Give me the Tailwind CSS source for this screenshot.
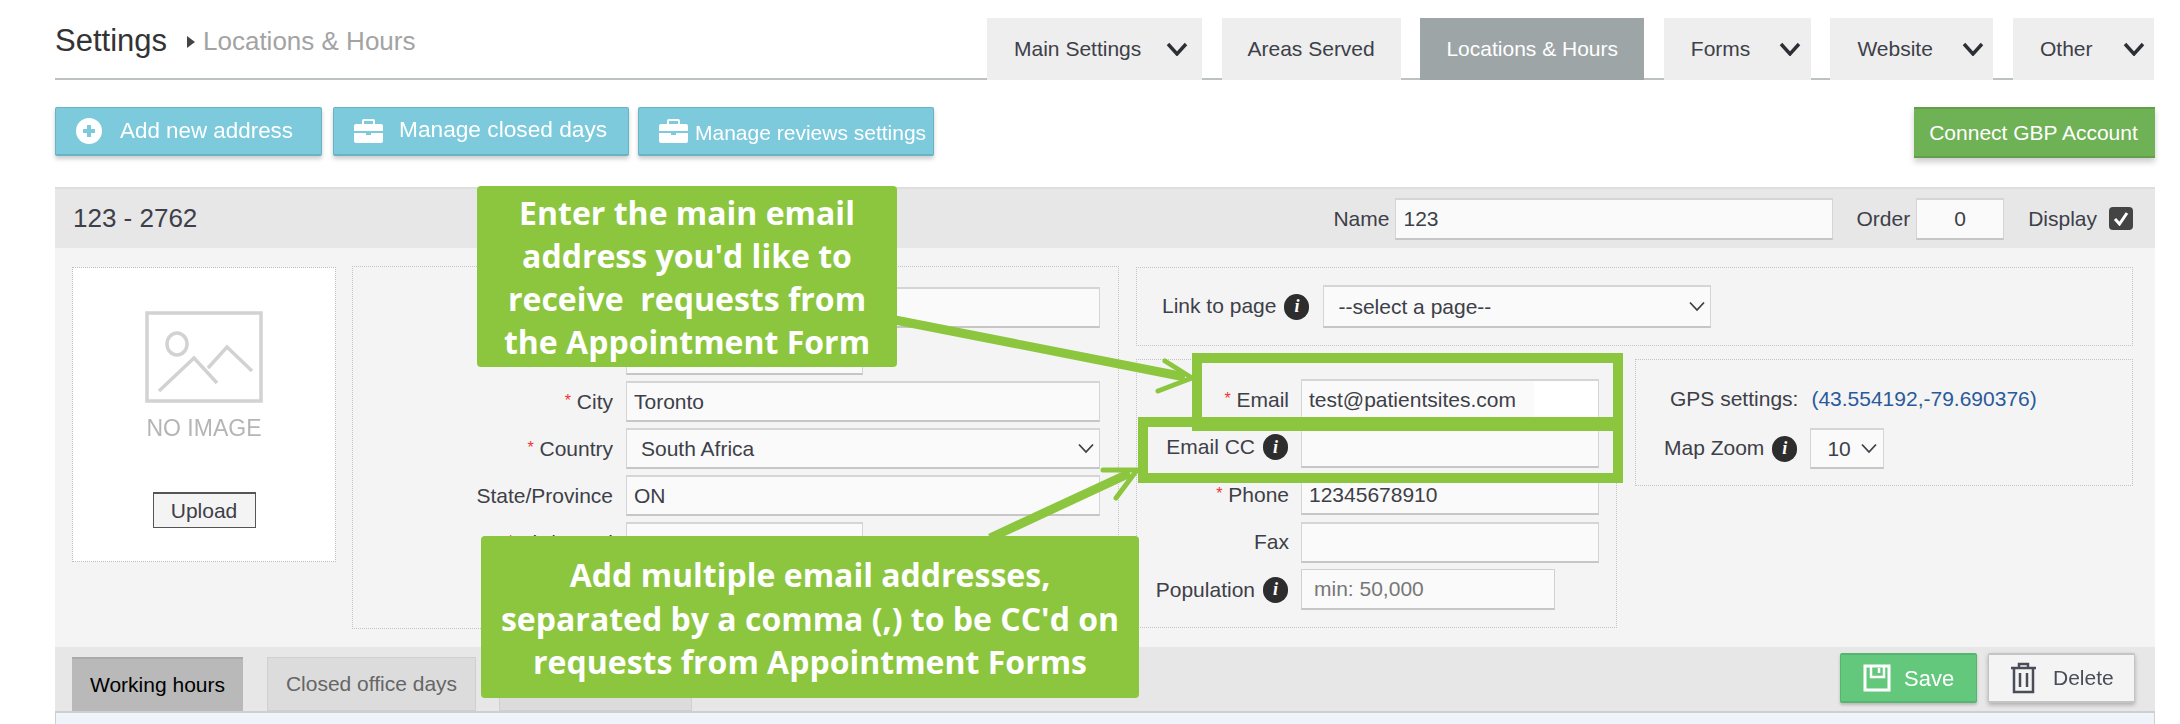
<!DOCTYPE html>
<html>
<head>
<meta charset="utf-8">
<script src="https://cdn.jsdelivr.net/npm/@tailwindcss/browser@4"></script>
</head>
<body class="bg-white">
<div class="relative w-[2180px] h-[724px] overflow-hidden bg-white text-[21px] text-[#3d4048] font-['Liberation_Sans',Arial,sans-serif]">

  <!-- Page header -->
  <header class="ml-[55px] w-[2099px] h-[80px] flex border-b-2 border-[#bcc1c1]">
    <div class="flex items-center h-[78px] pt-[4px]">
      <span class="text-[31px] text-[#333]">Settings</span>
      <svg class="ml-[20px] mt-[2px]" width="8" height="12" viewBox="0 0 8 12"><path d="M0 0 L8 6 L0 12 Z" fill="#444"/></svg>
      <span class="ml-[8px] text-[26px] text-[#a3a3a3]">Locations &amp; Hours</span>
    </div>
    <nav class="ml-auto flex gap-[19.6px] pt-[18px] h-[80px]">
      <div class="w-[215px] bg-[#eeeeee] flex items-center pl-[27px]">
        <span>Main Settings</span>
        <svg class="ml-[25px]" width="22" height="14" viewBox="0 0 22 14"><path d="M2 2 L11 12 L20 2" fill="none" stroke="#2c2f36" stroke-width="3.4"/></svg>
      </div>
      <div class="w-[179px] bg-[#eeeeee] flex items-center justify-center">Areas Served</div>
      <div class="w-[224px] bg-[#9ea5a7] text-white flex items-center justify-center">Locations &amp; Hours</div>
      <div class="w-[147px] bg-[#eeeeee] flex items-center pl-[27px]">
        <span>Forms</span>
        <svg class="ml-[29px]" width="22" height="14" viewBox="0 0 22 14"><path d="M2 2 L11 12 L20 2" fill="none" stroke="#2c2f36" stroke-width="3.4"/></svg>
      </div>
      <div class="w-[163px] bg-[#eeeeee] flex items-center pl-[27px]">
        <span>Website</span>
        <svg class="ml-[29px]" width="22" height="14" viewBox="0 0 22 14"><path d="M2 2 L11 12 L20 2" fill="none" stroke="#2c2f36" stroke-width="3.4"/></svg>
      </div>
      <div class="w-[141px] bg-[#eeeeee] flex items-center pl-[27px]">
        <span>Other</span>
        <svg class="ml-[30px]" width="22" height="14" viewBox="0 0 22 14"><path d="M2 2 L11 12 L20 2" fill="none" stroke="#2c2f36" stroke-width="3.4"/></svg>
      </div>
    </nav>
  </header>

  <!-- Action buttons -->
  <div class="ml-[55px] mt-[27px] w-[2100px] h-[51px] flex text-white">
    <button class="w-[267px] h-[49px] flex items-center pl-[20px] bg-[#7ccadc] border border-[#68b4c6] border-b-2 rounded-[2px] shadow-[0_3px_4px_rgba(0,0,0,0.2)]">
      <span class="flex items-center blur-[0.5px]">
        <svg width="26" height="26" viewBox="0 0 26 26"><circle cx="13" cy="13" r="13" fill="#fff"/><path d="M13 7 V19 M7 13 H19" stroke="#7ccadc" stroke-width="4"/></svg>
        <span class="ml-[18px] text-[22.4px]">Add new address</span>
      </span>
    </button>
    <button class="ml-[11px] w-[296px] h-[49px] flex items-center pl-[20px] bg-[#7ccadc] border border-[#68b4c6] border-b-2 rounded-[2px] shadow-[0_3px_4px_rgba(0,0,0,0.2)]">
      <span class="flex items-center blur-[0.5px]">
        <svg width="29" height="24" viewBox="0 0 29 24"><path d="M9 5 V2 Q9 1 10 1 H19 Q20 1 20 2 V5" fill="none" stroke="#fff" stroke-width="2"/><path d="M2 5 H27 Q29 5 29 7 V12 H0 V7 Q0 5 2 5 Z" fill="#fff"/><path d="M0 14 H12 V16 H17 V14 H29 V22 Q29 24 27 24 H2 Q0 24 0 22 Z" fill="#fff"/></svg>
        <span class="ml-[16px] mb-[3px] text-[22.7px]">Manage closed days</span>
      </span>
    </button>
    <button class="ml-[9px] w-[296px] h-[49px] flex items-center pl-[20px] bg-[#7ccadc] border border-[#68b4c6] border-b-2 rounded-[2px] shadow-[0_3px_4px_rgba(0,0,0,0.2)]">
      <span class="flex items-center blur-[0.5px]">
        <svg width="29" height="24" viewBox="0 0 29 24"><path d="M9 5 V2 Q9 1 10 1 H19 Q20 1 20 2 V5" fill="none" stroke="#fff" stroke-width="2"/><path d="M2 5 H27 Q29 5 29 7 V12 H0 V7 Q0 5 2 5 Z" fill="#fff"/><path d="M0 14 H12 V16 H17 V14 H29 V22 Q29 24 27 24 H2 Q0 24 0 22 Z" fill="#fff"/></svg>
        <span class="ml-[7px] mt-[3px] text-[21px] whitespace-nowrap">Manage reviews settings</span>
      </span>
    </button>
    <button class="ml-auto w-[241px] h-[51px] bg-[#6fb155] border-t-2 border-b-2 border-[#639f4b] shadow-[0_4px_6px_rgba(0,0,0,0.2)] text-[21px] whitespace-nowrap pr-[2px]">Connect GBP Account</button>
  </div>

  <!-- Location panel -->
  <section class="ml-[55px] mt-[29px] w-[2100px]">
    <div class="h-[61px] bg-[#e7e7e7] border-t-2 border-[#dedede] flex items-center pl-[18px] pr-[22px]">
      <span class="text-[26px]">123 - 2762</span>
      <div class="ml-auto flex items-center">
        <span>Name</span>
        <input value="123" class="ml-[6px] w-[438px] h-[42px] pl-[7px] bg-[#fafafa] border border-[#d5d5d5] border-t-2 border-b-2 border-b-[#c6c6c6]">
        <span class="ml-[23px]">Order</span>
        <input value="0" class="ml-[6px] w-[88px] h-[42px] text-center bg-[#fafafa] border border-[#d5d5d5] border-t-2 border-b-2 border-b-[#c6c6c6]">
        <span class="ml-[24px]">Display</span>
        <span class="ml-[12px] w-[24px] h-[23px] rounded-[4px] bg-[#444] flex items-center justify-center">
          <svg width="16" height="15" viewBox="0 0 16 15"><path d="M2 8 L6.5 13 L14 2" fill="none" stroke="#fff" stroke-width="3"/></svg>
        </span>
      </div>
    </div>

    <div class="h-[399px] bg-[#f4f4f4] flex items-start pl-[17px] pt-[19px]">
      <!-- Image -->
      <div class="w-[264px] h-[295px] bg-white border border-dotted border-[#bbb] flex flex-col items-center">
        <svg class="mt-[43px] blur-[0.5px]" width="118" height="92" viewBox="0 0 118 92" fill="none" stroke="#d2d2d2" stroke-width="3.5">
          <rect x="2" y="2" width="114" height="88"/>
          <ellipse cx="32" cy="33" rx="10" ry="11"/>
          <path d="M14 80 L49 47 L72 72 M63 57 L82 36 L107 60"/>
        </svg>
        <span class="mt-[12px] text-[23px] leading-[26px] text-[#b5b5b5] blur-[0.4px]">NO IMAGE</span>
        <button class="mt-[51px] w-[103px] h-[36px] border border-[#555] border-t-2 bg-[#f4f4f4] text-[21px]">Upload</button>
      </div>

      <!-- Address -->
      <div class="ml-[16px] -mt-[1px] w-[767px] h-[363px] border border-dotted border-[#c4c4c4] pt-[20px] flex flex-col gap-[6px]">
        <div class="flex items-center h-[41px] pl-[273px]"><input class="w-[474px] h-[41px] pl-[7px] bg-[#fafafa] border border-[#d5d5d5] border-t-2 border-b-2 border-b-[#c6c6c6]"></div>
        <div class="flex items-center h-[41px] pl-[273px]"><input class="w-[237px] h-[41px] pl-[7px] bg-[#fafafa] border border-[#d5d5d5] border-t-2 border-b-2 border-b-[#c6c6c6]"></div>
        <div class="flex items-center h-[41px]"><label class="w-[260px] text-right"><span class="text-[#e33] text-[16px] align-[3px]">*</span> City</label><input value="Toronto" class="ml-[13px] w-[474px] h-[41px] pl-[7px] bg-[#fafafa] border border-[#d5d5d5] border-t-2 border-b-2 border-b-[#c6c6c6]"></div>
        <div class="flex items-center h-[41px]"><label class="w-[260px] text-right"><span class="text-[#e33] text-[16px] align-[3px]">*</span> Country</label>
          <div class="relative ml-[13px] w-[474px] h-[41px]">
            <select class="appearance-none w-full h-full pl-[14px] bg-[#fafafa] border border-[#d5d5d5] border-t-2 border-b-2 border-b-[#c6c6c6]"><option>South Africa</option></select>
            <svg class="absolute right-[6px] top-[15px]" width="16" height="11" viewBox="0 0 16 11"><path d="M1 1.5 L8 9 L15 1.5" fill="none" stroke="#3d4048" stroke-width="1.8"/></svg>
          </div>
        </div>
        <div class="flex items-center h-[41px]"><label class="w-[260px] text-right">State/Province</label><input value="ON" class="ml-[13px] w-[474px] h-[41px] pl-[7px] bg-[#fafafa] border border-[#d5d5d5] border-t-2 border-b-2 border-b-[#c6c6c6]"></div>
        <div class="flex items-center h-[41px]"><label class="w-[260px] text-right"><span class="text-[#e33] text-[16px] align-[3px]">*</span> Zip/Postal</label><input value="L5M 2B3" class="ml-[13px] w-[237px] h-[41px] pl-[7px] text-[#ccc] bg-[#fafafa] border border-[#d5d5d5] border-t-2 border-b-2 border-b-[#c6c6c6]"></div>
      </div>

      <!-- Right column -->
      <div class="ml-[17px] w-[997px]">
        <div class="h-[79px] border border-dotted border-[#c4c4c4] flex items-center pl-[25px]">
          <span class="mb-[2px]">Link to page</span>
          <span class="ml-[8px] w-[25px] h-[26px] rounded-full bg-[#2d2d2d] flex items-center justify-center text-white text-[18px] font-bold italic font-['Liberation_Serif',serif]">i</span>
          <div class="relative ml-[14px] w-[388px] h-[43px]">
            <select class="appearance-none w-full h-full pl-[14px] bg-[#fafafa] border border-[#d5d5d5] border-t-2 border-b-2 border-b-[#c6c6c6]"><option>--select a page--</option></select>
            <svg class="absolute right-[6px] top-[16px]" width="16" height="11" viewBox="0 0 16 11"><path d="M1 1.5 L8 9 L15 1.5" fill="none" stroke="#3d4048" stroke-width="1.8"/></svg>
          </div>
        </div>
        <div class="mt-[13px] flex items-start">
          <div class="w-[481px] h-[269px] border border-dotted border-[#c4c4c4] pt-[19px] flex flex-col gap-[6.5px]">
            <div class="flex items-center h-[41px]"><label class="w-[152px] text-right"><span class="text-[#e33] text-[16px] align-[3px]">*</span> Email</label><input value="test@patientsites.com" class="ml-[12px] w-[298px] h-[41px] pl-[7px] bg-[linear-gradient(to_right,#fafafa_232px,#ffffff_232px)] border border-[#d5d5d5] border-t-2 border-b-2 border-b-[#c6c6c6]"></div>
            <div class="flex items-center h-[41px]"><label class="w-[152px] flex items-center justify-end pr-[1px]">Email CC<span class="ml-[8px] w-[25px] h-[26px] rounded-full bg-[#2d2d2d] flex items-center justify-center text-white text-[18px] font-bold italic font-['Liberation_Serif',serif]">i</span></label><input class="ml-[12px] w-[298px] h-[41px] pl-[7px] bg-[#fafafa] border border-[#d5d5d5] border-t-2 border-b-2 border-b-[#c6c6c6]"></div>
            <div class="flex items-center h-[41px]"><label class="w-[152px] text-right"><span class="text-[#e33] text-[16px] align-[3px]">*</span> Phone</label><input value="12345678910" class="ml-[12px] w-[298px] h-[41px] pl-[7px] bg-[#fafafa] border border-[#d5d5d5] border-t-2 border-b-2 border-b-[#c6c6c6]"></div>
            <div class="flex items-center h-[41px]"><label class="w-[152px] text-right">Fax</label><input class="ml-[12px] w-[298px] h-[41px] pl-[7px] bg-[#fafafa] border border-[#d5d5d5] border-t-2 border-b-2 border-b-[#c6c6c6]"></div>
            <div class="flex items-center h-[41px]"><label class="w-[152px] flex items-center justify-end pr-[1px]">Population<span class="ml-[8px] w-[25px] h-[26px] rounded-full bg-[#2d2d2d] flex items-center justify-center text-white text-[18px] font-bold italic font-['Liberation_Serif',serif]">i</span></label><input placeholder="min: 50,000" class="ml-[12px] w-[254px] h-[41px] pl-[12px] placeholder:text-[#777] bg-[#fafafa] border border-[#cfcfcf] border-b-2 border-b-[#c6c6c6]"></div>
          </div>
          <div class="ml-[18px] w-[498px] h-[127px] border border-dotted border-[#c4c4c4] pt-[24px] pl-[29px]">
            <div class="flex items-center h-[30px]">
              <span class="ml-[5px]">GPS settings:</span>
              <span class="ml-[13px] text-[#2a5a9a]">(43.554192,-79.690376)</span>
            </div>
            <div class="flex items-center mt-[14px] h-[41px]">
              <span class="-ml-[1px] mb-[2px]">Map Zoom</span>
              <span class="ml-[8px] w-[25px] h-[26px] rounded-full bg-[#2d2d2d] flex items-center justify-center text-white text-[18px] font-bold italic font-['Liberation_Serif',serif]">i</span>
              <div class="relative ml-[13px] w-[74px] h-[41px]">
                <select class="appearance-none w-full h-full pl-[16px] bg-[#fafafa] border border-[#d5d5d5] border-t-2 border-b-2 border-b-[#c6c6c6]"><option>10</option></select>
                <svg class="absolute right-[7px] top-[15px]" width="16" height="11" viewBox="0 0 16 11"><path d="M1 1.5 L8 9 L15 1.5" fill="none" stroke="#3d4048" stroke-width="1.8"/></svg>
              </div>
            </div>
          </div>
        </div>
      </div>
    </div>

    <!-- Footer tabs & actions -->
    <div class="h-[66px] bg-[#e7e7e7] border-b-2 border-[#cfcfcf] flex items-end pl-[17px] pr-[20px]">
      <div class="w-[171px] h-[54px] bg-[#b9b9b9] border-t-2 border-[#aaa] flex items-center justify-center text-black">Working hours</div>
      <div class="ml-[24px] w-[209px] h-[54px] bg-[#dcdcdc] border border-[#cfcfcf] flex items-center justify-center text-[#666]">Closed office days</div>
      <div class="ml-[23px] w-[193px] h-[54px] bg-[#dcdcdc] border border-[#cfcfcf]"></div>
      <div class="ml-auto self-start mt-[6px] flex">
        <button class="w-[137px] h-[50px] bg-[#64c87c] border border-[#56b56e] border-t-2 border-b-2 rounded-[2px] shadow-[0_2px_3px_rgba(0,0,0,0.2)] text-white flex items-center pl-[22px]">
          <span class="flex items-center blur-[0.5px]">
            <svg width="28" height="28" viewBox="0 0 28 28"><path d="M2 2 H26 V26 H2 Z" fill="none" stroke="#fff" stroke-width="3"/><path d="M8 2 V13 H21 V2 M16 4 V9" fill="none" stroke="#fff" stroke-width="2.5"/></svg>
            <span class="ml-[13px] text-[22px]">Save</span>
          </span>
        </button>
        <button class="ml-[11px] w-[147px] h-[50px] bg-[#f4f4f4] border border-[#c4c4c4] border-t-2 border-b-2 rounded-[2px] shadow-[0_2px_4px_rgba(0,0,0,0.25)] text-[#4a4d57] flex items-center pl-[21px]">
          <span class="flex items-center blur-[0.4px]">
            <svg width="27" height="32" viewBox="0 0 27 32" fill="none" stroke="#4a4d57" stroke-width="2.5"><path d="M1 6 H26 M9 5 V2 H18 V5"/><path d="M4 6 V30 H23 V6"/><path d="M10 11 V25 M17 11 V25"/></svg>
            <span class="ml-[16px]">Delete</span>
          </span>
        </button>
      </div>
    </div>
    <div class="h-[11px] bg-[#eff3fa] border-x border-[#cfcfcf]"></div>
  </section>

  <!-- Annotation overlay -->
  <svg class="absolute left-0 top-0 pointer-events-none" width="2180" height="724" viewBox="0 0 2180 724" fill="none" stroke="#8cc63e">
    <path d="M895 320 L1185 377" stroke-width="9"/>
    <path d="M1165 361 L1192 378 L1158 391" stroke-width="5" stroke-linecap="round" stroke-linejoin="round"/>
    <path d="M990 538 L1130 473" stroke-width="9"/>
    <path d="M1103 470 L1137 470 L1116 498" stroke-width="5" stroke-linecap="round" stroke-linejoin="round"/>
    <rect x="1197" y="358" width="421" height="68" stroke-width="10"/>
    <rect x="1143" y="422" width="475" height="56" stroke-width="10"/>
  </svg>

  <div class="absolute left-[477px] top-[186px] w-[420px] h-[181px] rounded-[4px] bg-[#8cc63e] pt-[5px] text-center text-white text-[32px] leading-[43px] font-bold font-['Open_Sans',sans-serif]">
    <div>Enter the main email</div>
    <div>address you'd like to</div>
    <div class="whitespace-pre">receive  requests from</div>
    <div>the Appointment Form</div>
  </div>
  <div class="absolute left-[481px] top-[536px] w-[658px] h-[162px] rounded-[4px] bg-[#8cc63e] pt-[17px] text-center text-white text-[32px] leading-[43.5px] font-bold font-['Open_Sans',sans-serif]">
    <div>Add multiple email addresses,</div>
    <div>separated by a comma (,) to be CC'd on</div>
    <div>requests from Appointment Forms</div>
  </div>
</div>
</body>
</html>
